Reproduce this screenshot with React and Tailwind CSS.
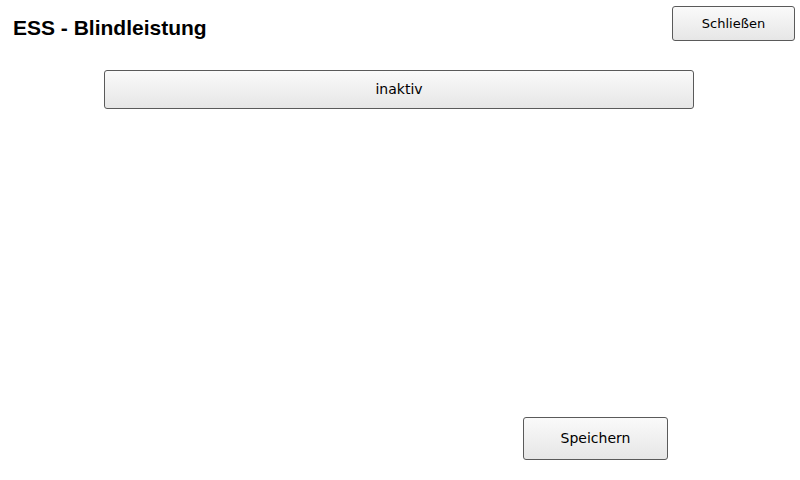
export default function App() {
  const btn =
    "rounded-[3px] border border-[#5a5a5a] bg-linear-to-b from-[#fafafa] to-[#e6e6e6] text-black flex items-center justify-center";

  return (
    <div className="w-[800px] h-[480px] bg-white flex flex-col" style={{ fontFamily: '"DejaVu Sans", sans-serif' }}>
      <div className="flex justify-between items-start pt-[6px] pr-[5px]">
        <h1
          className="ml-[13px] mt-[11px] text-[21px] font-bold leading-none text-black"
          style={{ fontFamily: '"Liberation Sans", Arial, sans-serif' }}
        >
          ESS - Blindleistung
        </h1>
        <button className={`${btn} w-[123px] h-[35px] text-[13px]`}>Schließen</button>
      </div>

      <button className={`${btn} ml-[104px] mt-[29px] w-[590px] h-[39px] text-[14px]`}>inaktiv</button>

      <div className="flex-1" />

      <button className={`${btn} ml-[523px] mb-[20px] w-[145px] h-[43px] text-[14px]`}>Speichern</button>
    </div>
  );
}
